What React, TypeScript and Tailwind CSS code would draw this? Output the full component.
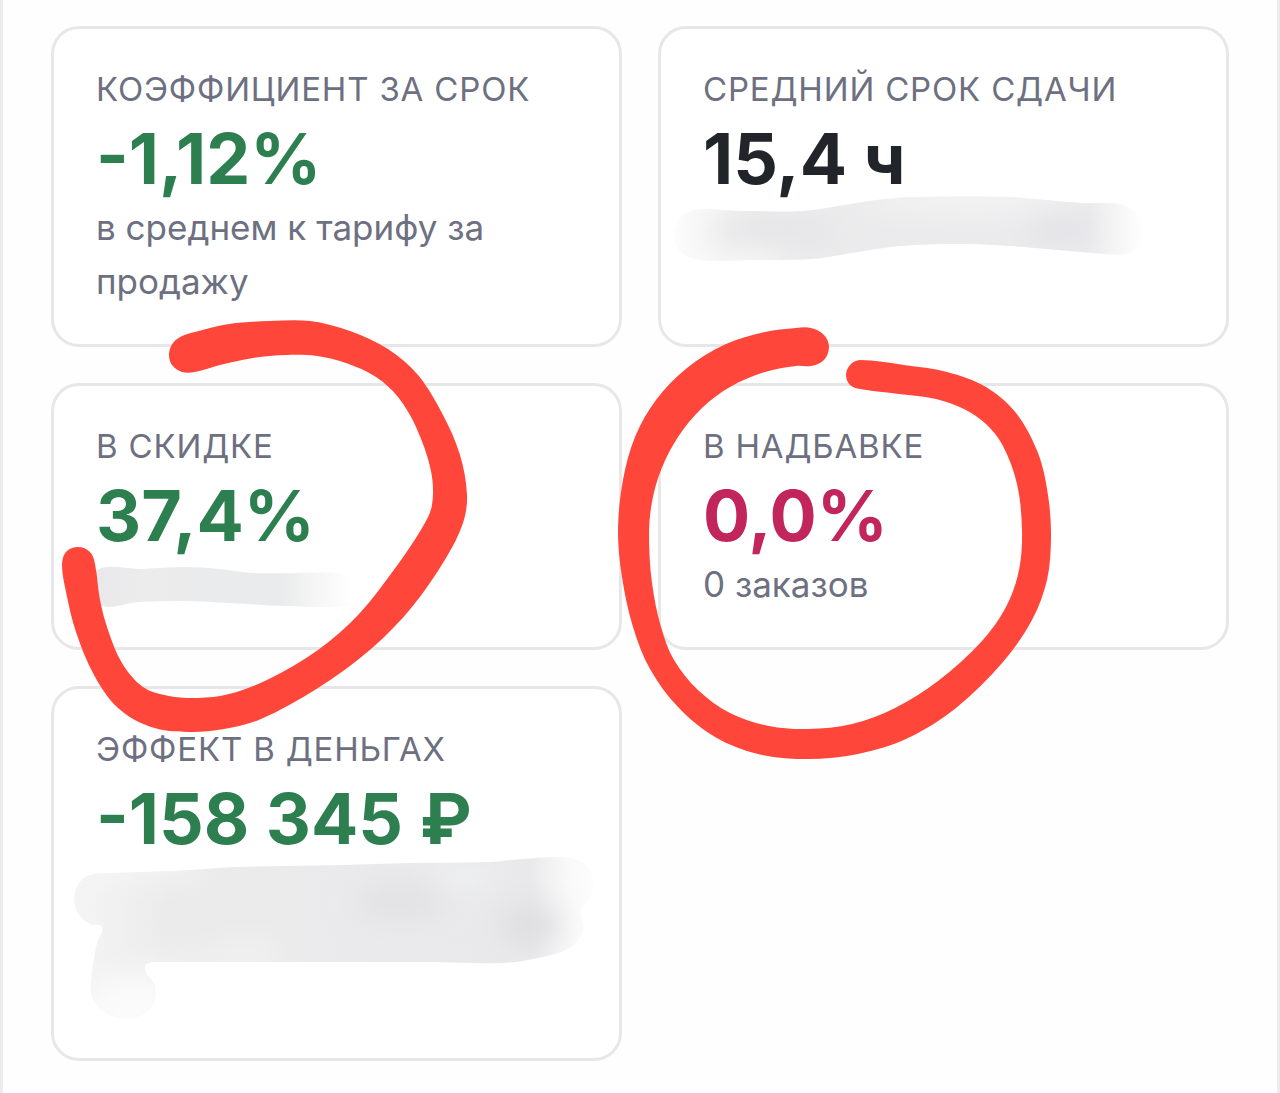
import clsx from "clsx";
import type { ReactElement } from "react";

type Point = [number, number];

type Stat = {
	label: string;
	value: string;
	tone: "good" | "bad" | "neutral";
	detail?: string;
	detailClass?: string;
};

const stats: Stat[] = [
	{
		label: "Коэффициент за срок",
		value: "-1,12%",
		tone: "good",
		detail: "в среднем к тарифу за продажу",
	},
	{ label: "Средний срок сдачи", value: "15,4 ч", tone: "neutral" },
	{ label: "В скидке", value: "37,4%", tone: "good" },
	{ label: "В надбавке", value: "0,0%", tone: "bad", detail: "0 заказов" },
	{
		label: "Эффект в деньгах",
		value: "-158 345 ₽",
		tone: "good",
		detailClass: "min-h-[162px]",
	},
];

const distance = (a: Point, b: Point): number =>
	Math.hypot(b[0] - a[0], b[1] - a[1]);

// Closed curve through the points. Handles are a third of their own segment,
// so short steps next to long ones do not kink.
const smooth = (points: Point[]): string => {
	const n = points.length;
	const tangents = points.map((_, i): Point => {
		const prev = points[(i + n - 1) % n];
		const next = points[(i + 1) % n];
		const length = distance(prev, next) || 1;
		return [(next[0] - prev[0]) / length, (next[1] - prev[1]) / length];
	});
	const segments = points.map((from, i) => {
		const j = (i + 1) % n;
		const to = points[j];
		const handle = distance(from, to) / 3;
		return `C${from[0] + tangents[i][0] * handle} ${
			from[1] + tangents[i][1] * handle
		} ${to[0] - tangents[j][0] * handle} ${
			to[1] - tangents[j][1] * handle
		} ${to[0]} ${to[1]}`;
	});
	return `M${points[0][0]} ${points[0][1]}${segments.join("")}Z`;
};

const leftStroke = smooth([
	[182, 336], [195, 332], [229, 324], [269, 321], [310, 321], [350, 331], [388, 349],
	[418, 375], [443, 415], [460, 455], [467, 495], [463, 523], [446, 558],
	[412, 607], [371, 649], [318, 688], [261, 719], [224, 729], [188, 732],
	[151, 727], [118, 708], [94, 675], [76, 632], [66, 592], [62, 565],
	[66, 552], [78, 547], [90, 552], [95, 564], [100, 600], [108, 630],
	[122, 663], [143, 687], [169, 696], [198, 698], [229, 694], [269, 679],
	[318, 650], [359, 614], [396, 567], [422, 528], [432, 505], [431, 471],
	[416, 427], [398, 397], [376, 377], [346, 363], [317, 356], [286, 355],
	[253, 358], [220, 365], [195, 372], [182, 372], [172, 365], [169, 354],
	[173, 343],
]);

const rightStroke = smooth([
	[811, 328], [824, 335], [829, 347], [824, 360], [811, 366], [796, 366],
	[765, 372], [730, 387], [702, 408], [678, 437], [661, 470], [652, 502],
	[649, 535], [652, 583], [661, 627], [674, 660], [698, 690], [730, 713],
	[769, 726], [808, 729], [852, 724], [895, 708], [938, 681], [982, 641],
	[1006, 607], [1019, 570], [1022, 530], [1017, 484], [1003, 446], [986, 424],
	[964, 409], [936, 399], [899, 394], [860, 389], [850, 385],
	[846, 375], [850, 365], [860, 360], [904, 365], [947, 372],
	[986, 387], [1016, 413], [1038, 453], [1048, 495], [1051, 537], [1047, 580],
	[1032, 620], [1003, 662], [956, 708], [908, 738], [858, 754], [808, 759],
	[758, 754], [715, 737], [678, 707], [650, 669], [633, 627], [622, 577],
	[618, 530], [623, 480], [635, 437], [656, 400], [687, 368], [726, 344],
	[765, 332], [796, 328],
]);

const termSmudge = smooth([
	[690, 211], [740, 211], [803, 211], [844, 205], [885, 199], [922, 197],
	[1007, 197], [1081, 203], [1126, 206], [1144, 225], [1140, 245], [1126, 254],
	[1081, 252], [1024, 247], [966, 244], [901, 246], [852, 253], [811, 259],
	[750, 260], [701, 260], [679, 250], [674, 230],
]);

const discountSmudge = smooth([
	[94, 572], [143, 569], [184, 567], [220, 569], [253, 573], [300, 573],
	[339, 573], [355, 580], [358, 598], [347, 606], [286, 606], [229, 603],
	[184, 601], [139, 602], [98, 604],
]);

const moneySmudge = smooth([
	[90, 875], [110, 873], [175, 871], [237, 867], [343, 865], [408, 863],
	[490, 862], [522, 859], [571, 858], [590, 870], [592, 893], [581, 910],
	[583, 930], [571, 947], [543, 957], [502, 963], [429, 962], [286, 962],
	[160, 962], [146, 964], [146, 972], [155, 987], [151, 1007], [131, 1018],
	[106, 1013], [92, 997], [92, 973], [97, 943], [102, 927], [90, 924],
	[79, 915], [74, 900], [79, 883],
]);

const StatCard = ({ stat }: { stat: Stat }): ReactElement => (
	<div className="rounded-[28px] border-[3px] border-[#e7e7e9] bg-white px-[42px] py-9">
		<dt className="text-[33px] leading-[48px] tracking-wide text-[#6d7080] uppercase">
			{stat.label}
		</dt>
		<dd
			className={clsx(
				"pt-1 text-[70px] leading-[83px] font-bold",
				stat.tone === "good" && "text-[#2e7f50]",
				stat.tone === "bad" && "text-[#c2255c]",
				stat.tone === "neutral" && "text-[#212529]",
			)}
		>
			{stat.value}
		</dd>
		<dd
			className={clsx(
				"min-h-[54px] text-[35px] leading-[54px] text-[#6d7080]",
				stat.detailClass,
			)}
		>
			{stat.detail}
		</dd>
	</div>
);

const Markup = (): ReactElement => (
	<svg
		className="pointer-events-none absolute top-0 left-0 h-auto w-full"
		viewBox="0 0 1280 1093"
		aria-hidden="true"
	>
		<defs>
			<linearGradient id="fade-both">
				<stop offset="0" stopColor="#ededee" stopOpacity="0.1" />
				<stop offset="0.12" stopColor="#ebebec" />
				<stop offset="0.88" stopColor="#ebebed" />
				<stop offset="1" stopColor="#ededee" stopOpacity="0" />
			</linearGradient>
			<linearGradient id="fade-right">
				<stop offset="0" stopColor="#e8e8ea" />
				<stop offset="0.2" stopColor="#ececed" />
				<stop offset="0.7" stopColor="#e9eaeb" />
				<stop offset="0.98" stopColor="#ededee" stopOpacity="0" />
			</linearGradient>
			<linearGradient id="fade-money">
				<stop offset="0" stopColor="#f5f5f5" />
				<stop offset="0.18" stopColor="#ebebec" />
				<stop offset="0.88" stopColor="#e9e9eb" />
				<stop offset="1" stopColor="#f5f5f5" stopOpacity="0.2" />
			</linearGradient>
			<filter id="soft" x="-50%" y="-50%" width="200%" height="200%">
				<feGaussianBlur stdDeviation="14" />
			</filter>
			<clipPath id="term-clip">
				<path d={termSmudge} />
			</clipPath>
			<clipPath id="money-clip">
				<path d={moneySmudge} />
			</clipPath>
		</defs>

		<path d={termSmudge} fill="url(#fade-both)" />
		<g clipPath="url(#term-clip)">
			<g filter="url(#soft)">
				<ellipse cx="780" cy="232" rx="60" ry="12" fill="#e4e4e6" />
				<ellipse cx="1060" cy="228" rx="36" ry="14" fill="#e2e2e6" />
				<ellipse cx="970" cy="198" rx="110" ry="12" fill="#f5f5f5" />
				<ellipse cx="720" cy="264" rx="70" ry="12" fill="#fafafa" />
				<ellipse cx="700" cy="205" rx="50" ry="8" fill="#fafafa" />
			</g>
		</g>
		<path d={discountSmudge} fill="url(#fade-right)" />
		<path d={moneySmudge} fill="url(#fade-money)" />
		<g clipPath="url(#money-clip)">
			<g filter="url(#soft)">
				<ellipse cx="530" cy="925" rx="30" ry="20" fill="#dedee1" />
				<ellipse cx="400" cy="902" rx="46" ry="16" fill="#e1e1e4" />
				<ellipse cx="250" cy="954" rx="34" ry="12" fill="#f3f3f3" />
				<ellipse cx="465" cy="876" rx="30" ry="10" fill="#f1f2f2" />
				<ellipse cx="590" cy="862" rx="20" ry="30" fill="#fbfbfb" />
				<ellipse cx="135" cy="1010" rx="50" ry="36" fill="#fbfbfb" />
				<ellipse cx="180" cy="964" rx="50" ry="8" fill="#f3f3f3" />
				<ellipse cx="140" cy="868" rx="70" ry="8" fill="#f8f8f8" />
			</g>
		</g>

		<path d={leftStroke} fill="#ff463a" />
		<path d={rightStroke} fill="#ff463a" />
	</svg>
);

export default function App(): ReactElement {
	return (
		<div className="relative font-['Inter',sans-serif]">
			<main className="min-h-screen border-x-[3px] border-[#ececee] bg-[#fefefe] px-12 pt-[26px] pb-8">
				<dl className="grid grid-cols-2 gap-9">
					{stats.map((stat) => (
						<StatCard key={stat.label} stat={stat} />
					))}
				</dl>
			</main>
			<Markup />
		</div>
	);
}
